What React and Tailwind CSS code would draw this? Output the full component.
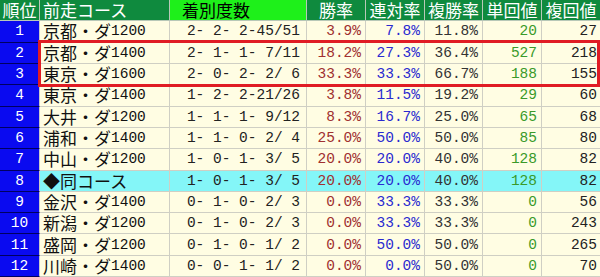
import React from 'react';

const rows = [
  ['1', '京都・ダ', '1200', '2- 2- 2-45/51', '3.9%', '7.8%', '11.8%', '20', '27'],
  ['2', '京都・ダ', '1400', '2- 1- 1- 7/11', '18.2%', '27.3%', '36.4%', '527', '218'],
  ['3', '東京・ダ', '1600', '2- 0- 2- 2/ 6', '33.3%', '33.3%', '66.7%', '188', '155'],
  ['4', '東京・ダ', '1400', '1- 2- 2-21/26', '3.8%', '11.5%', '19.2%', '29', '60'],
  ['5', '大井・ダ', '1200', '1- 1- 1- 9/12', '8.3%', '16.7%', '25.0%', '65', '68'],
  ['6', '浦和・ダ', '1400', '1- 1- 0- 2/ 4', '25.0%', '50.0%', '50.0%', '85', '80'],
  ['7', '中山・ダ', '1200', '1- 0- 1- 3/ 5', '20.0%', '20.0%', '40.0%', '128', '82'],
  ['8', '◆同コース', '', '1- 0- 1- 3/ 5', '20.0%', '20.0%', '40.0%', '128', '82'],
  ['9', '金沢・ダ', '1400', '0- 1- 0- 2/ 3', '0.0%', '33.3%', '33.3%', '0', '56'],
  ['10', '新潟・ダ', '1200', '0- 1- 0- 2/ 3', '0.0%', '33.3%', '33.3%', '0', '243'],
  ['11', '盛岡・ダ', '1200', '0- 1- 0- 1/ 2', '0.0%', '50.0%', '50.0%', '0', '265'],
  ['12', '川崎・ダ', '1400', '0- 0- 1- 1/ 2', '0.0%', '0.0%', '50.0%', '0', '70'],
];

const cols = 'grid grid-cols-[40px_130px_137px_59px_59px_58px_59px_58px]';
const jp = "font-['Noto_Sans_CJK_JP',sans-serif] text-[17px] leading-[20px]";
const mono = "font-['Liberation_Mono','Noto_Sans_CJK_JP',monospace] text-[14.5px] leading-[20px]";

export default function App() {
  return (
    <div className="relative w-[600px] h-[277px] flex flex-col bg-[#fffde3] overflow-hidden">
      {/* header */}
      <div className={`${cols} flex-1 text-white ${jp}`}>
        <div className="bg-[#0f8a3e] border-r border-b border-[#b8c8b8] flex items-center justify-center">順位</div>
        <div className="bg-[#0f8a3e] border-r border-b border-[#b8c8b8] flex items-center pl-[3px]">前走コース</div>
        <div className="bg-[#1ef01a] text-black border-r border-b border-[#b8c8b8] flex items-center pl-3">着別度数</div>
        <div className="bg-[#0f8a3e] border-r border-b border-[#b8c8b8] flex items-center justify-center">勝率</div>
        <div className="bg-[#0f8a3e] border-r border-b border-[#b8c8b8] flex items-center justify-center">連対率</div>
        <div className="bg-[#0f8a3e] border-r border-b border-[#b8c8b8] flex items-center justify-center">複勝率</div>
        <div className="bg-[#0f8a3e] border-r border-b border-[#b8c8b8] flex items-center justify-center">単回値</div>
        <div className="bg-[#0f8a3e] border-b border-[#b8c8b8] flex items-center justify-center">複回値</div>
      </div>

      {rows.map(r => {
        const same = r[0] === '8';
        const bg = same ? 'bg-[#84f6f8]' : 'bg-[#fffde3]';
        const cell = `${bg} border-r border-b border-[#cfcfc4] flex items-center`;
        return (
          <div key={r[0]} className={`${cols} flex-1`}>
            <div className={`bg-[#0a0af0] border-r border-b border-r-[#c8c8c8] border-b-[#000060] flex items-center justify-center text-white ${mono}`}>
              {r[0]}
            </div>
            <div className={`${cell} pl-[3px] text-[#111]`}>
              <span className={jp}>{r[1]}</span>
              {r[2] && <span className={mono}>{r[2]}</span>}
            </div>
            <div className={`${cell} justify-end pr-[6px] whitespace-pre text-[#222] ${mono}`}>{r[3]}</div>
            <div className={`${cell} justify-end pr-1 text-[#a03030] ${mono}`}>{r[4]}</div>
            <div className={`${cell} justify-end pr-1 text-[#2a2ad0] ${mono}`}>{r[5]}</div>
            <div className={`${cell} justify-end pr-1 text-[#333] ${mono}`}>{r[6]}</div>
            <div className={`${cell} justify-end pr-1 text-[#3a9a2a] ${mono}`}>{r[7]}</div>
            <div className={`${bg} border-b border-[#cfcfc4] flex items-center justify-end pr-[3px] text-[#222] ${mono}`}>{r[8]}</div>
          </div>
        );
      })}

      {/* highlight box around rows 2-3 */}
      <div className="absolute left-[38px] top-[40px] w-[562px] h-[47px] border-[3.5px] border-[#e01c24] pointer-events-none" />
    </div>
  );
}
